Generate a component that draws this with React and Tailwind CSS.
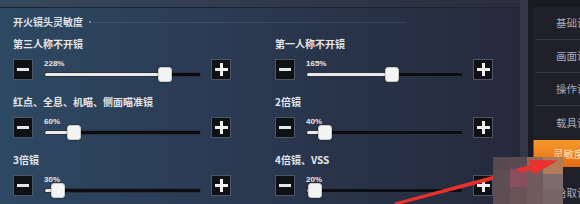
import React from "react";

function Minus() {
  return (
    <div className="w-[20px] h-[21px] shrink-0 bg-[#0f1115] border border-[#4d5666] flex items-center justify-center">
      <div className="w-[12px] h-[3px] bg-[#e6e6e6]" />
    </div>
  );
}

function Plus() {
  return (
    <div className="w-[20px] h-[21px] shrink-0 bg-[#0f1115] border border-[#4d5666] flex items-center justify-center relative">
      <div className="w-[13px] h-[3px] bg-[#efefef]" />
      <div className="absolute w-[3px] h-[13px] bg-[#efefef]" />
    </div>
  );
}

function Slider({ value, pct }) {
  return (
    <div className="flex-1 relative h-[21px] mx-[11px] mr-[10px]">
      <div className="text-[8px] leading-[9px] font-bold text-[#e8e8e8] font-['Liberation_Sans',sans-serif]">{value}</div>
      <div className="absolute left-0 right-0 top-[13px] h-[5px] rounded-[2px] bg-[#0c0d12] border border-[#2c3140]">
        <div className="h-full bg-[#e9e9e9] rounded-l-[2px]" style={{ width: pct + "%" }} />
      </div>
      <div
        className="absolute top-[8px] w-[14px] h-[15px] rounded-[3px] bg-[#f4f4f4] border border-[#c9c9c9] shadow-[0_0_2px_rgba(0,0,0,0.5)]"
        style={{ left: `calc(${pct}% - 7px)` }}
      />
    </div>
  );
}

function Cell({ label, value, pct }) {
  return (
    <div className="flex flex-col">
      <div className="h-[14px] leading-[14px] text-[10px] font-bold text-[#e4e6ea] whitespace-nowrap">{label}</div>
      <div className="flex items-start mt-[8px]">
        <Minus />
        <Slider value={value} pct={pct} />
        <Plus />
      </div>
    </div>
  );
}

const menu = ["基础设置", "画面设置", "操作设置", "载具设置"];

export default function App() {
  return (
    <div className="w-[580px] h-[204px] relative overflow-hidden flex font-['Noto_Sans_CJK_SC','Noto_Sans',sans-serif] bg-[#1e1f28]">
      {/* main panel */}
      <div className="w-[520px] shrink-0 h-full flex flex-col bg-gradient-to-r from-[#2e4963] via-[#2a3850] to-[#252a3b]">
        <div className="h-[8px] shrink-0 bg-gradient-to-r from-[#36495e] to-[#2a2d3d] border-b border-[#1c2432]" />
        <div className="pl-[13px] pt-[7px] flex flex-col">
          <div className="flex items-center h-[14px]">
            <span className="text-[10px] leading-[14px] font-bold text-[#dfe3ea]">开火镜头灵敏度</span>
            <div className="w-[2px] h-[2px] rounded-full bg-[#8a96a6] ml-[6px]" />
            <div className="w-[313px] h-px bg-[rgba(255,255,255,0.1)] ml-[2px]" />
          </div>
          <div className="grid grid-cols-[218px_218px] gap-x-[44px] gap-y-[15px] mt-[8px]">
            <Cell label="第三人称不开镜" value="228%" pct={77} />
            <Cell label="第一人称不开镜" value="165%" pct={55} />
            <Cell label="红点、全息、机瞄、侧面瞄准镜" value="60%" pct={19} />
            <Cell label="2倍镜" value="40%" pct={12} />
            <Cell label="3倍镜" value="30%" pct={9} />
            <Cell label="4倍镜、VSS" value="20%" pct={6} />
          </div>
        </div>
      </div>
      {/* divider strip */}
      <div className="w-[8px] shrink-0 h-full bg-[#34374a]" />
      <div className="w-[5px] shrink-0 h-full bg-[#1a1b23]" />
      {/* sidebar */}
      <div className="flex-1 min-w-0 overflow-hidden h-full flex flex-col bg-[#1f2029]">
        <div className="h-[7px] shrink-0 bg-[#1a1b22]" />
        {menu.map((m, i) => (
          <div key={m} className={`shrink-0 ml-[3px] flex items-center pl-[20px] text-[10.5px] text-[#a9abb6] whitespace-nowrap ${i === 3 ? "h-[34px]" : "h-[33px] border-b border-[#363744]"}`}>
            {m}
          </div>
        ))}
        <div className="h-[27px] shrink-0 flex items-center pl-[19px] text-[10.5px] text-[#fde2c6] whitespace-nowrap bg-gradient-to-b from-[#f59a2c] to-[#e56b12] border-l border-[#9a4d10]">
          灵敏度
        </div>
        <div className="flex-1 flex items-center pl-[23px] pt-[14px] text-[10.5px] text-[#a9abb6] whitespace-nowrap">
          拾取设置
        </div>
      </div>

      {/* arrow tail under mosaic */}
      <svg className="absolute inset-0 pointer-events-none" width="580" height="204">
        <polygon points="394.6,202.5 395.4,205.5 508,176 507,172" fill="#e8302c" />
      </svg>
      {/* mosaic */}
      <div className="absolute left-[493px] top-[157px] w-[70px] h-[47px] flex">
        <div className="w-[17px] h-full flex flex-col">
          <div className="h-[13px] bg-[#57494f]" />
          <div className="flex-1 bg-[#5e4e54]" />
        </div>
        <div className="w-[17px] h-full flex flex-col">
          <div className="h-[12px] bg-[#5b4b51]" />
          <div className="h-[18px] bg-[#8a4f5c]" />
          <div className="flex-1 bg-[#6a5358]" />
        </div>
        <div className="w-[16px] h-full flex flex-col">
          <div className="h-[12px] bg-[#8d6a5e]" />
          <div className="flex-1 bg-[#6f5b5d]" />
        </div>
        <div className="w-[20px] h-full flex flex-col">
          <div className="h-[17px] bg-[#b17b59]" />
          <div className="h-[15px] bg-[#7d6c6d]" />
          <div className="flex-1 bg-[#766567]" />
        </div>
      </div>
      {/* arrow head over mosaic */}
      <svg className="absolute inset-0 pointer-events-none" width="580" height="204">
        <polygon points="518,172.5 517,168.5 530,165 532,169.5" fill="#e8302c" />
        <polygon points="558,160.5 528.5,159.8 533.2,175" fill="#ea312b" />
      </svg>
    </div>
  );
}
